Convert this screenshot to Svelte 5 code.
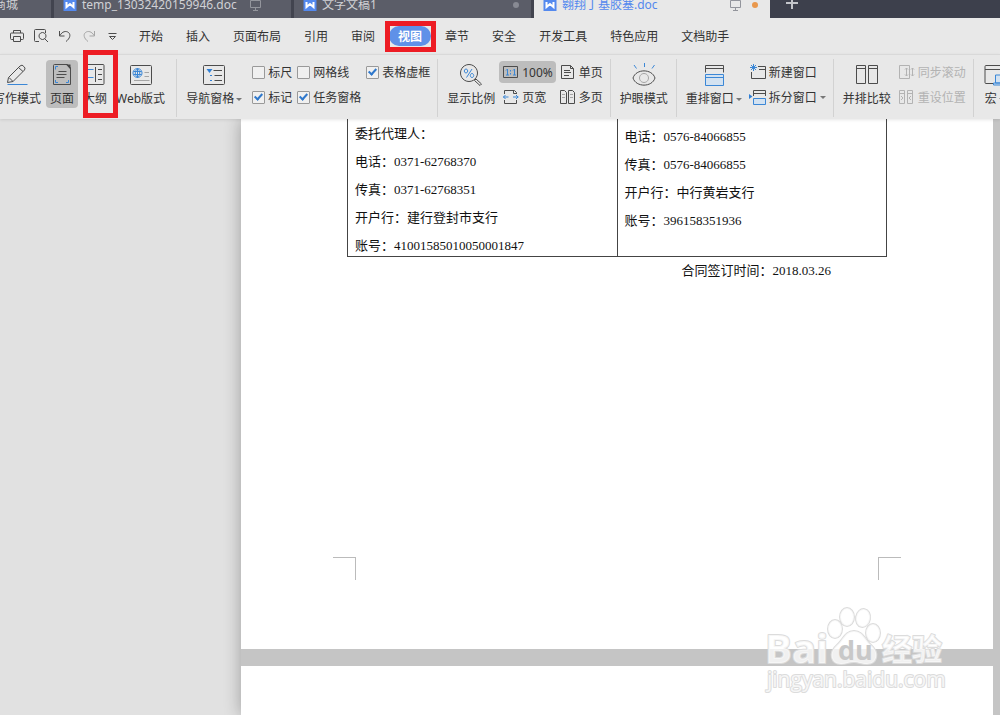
<script lang="ts">
  type Shape = [string, string];

  // k = dark stroke, b = blue stroke, f = light blue fill, s = solid blue, t = soft grey stroke, d = solid dark
  const icons: Record<string, Shape[]> = {
    print: [["k", "M4.500 5V2.500h7V5M4 11.500H2.500a1 1 0 0 1-1-1V6a1 1 0 0 1 1-1h11a1 1 0 0 1 1 1v4.500a1 1 0 0 1-1 1H12M4.500 8.500h7v5h-7z"]],
    preview: [["k", "M6 13.500H2.500a1 1 0 0 1-1-1v-10a1 1 0 0 1 1-1h9a1 1 0 0 1 1 1V5M11.500 10.500l3.500 3.500M9.500 4.500a3.500 3.500 0 1 0 .010 0z"]],
    undo: [["k", "M2.500 3v5h5M3 7.500c2-4 6-5 8.500-3s1.500 6-2.500 9"]],
    redo: [["t", "M13.500 3v5h-5M13 7.500c-2-4-6-5-8.500-3s-1.500 6 2.500 9"]],
    more: [["k", "M3.500 5.500h8M4.500 8.500l3 3 3-3z"]],
    pen: [["k", "M2.500 19.500l1-5L15 3a2.500 2.500 0 0 1 3.800.500 2.500 2.500 0 0 1 .700 3.500L8 18.500zM4 14.500l4 4M13.500 4.500l4.500 4"], ["b", "M2.500 21.500h20"]],
    page: [["k", "M8.500 8.500h8M6.500 11.500h10M6.500 14.500h8M4.500 1.500h13l3 3v17h-17v-19a1 1 0 0 1 1-1z"], ["b", "M5.500 6.500V3.500H8M5.500 17v2.500H8M18.500 17v2.500H16"], ["d", "M16 1.500h4.500v5z"]],
    outline: [["k", "M3 1.500h17a1 1 0 0 1 1 1v18a1 1 0 0 1-1 1H3zM12.500 4v15M15 6.500h4M15 11.500h4M15 16.500h4"], ["b", "M5 6.500h5.500M5 14.500h5.500"]],
    web: [["k", "M2.500 2.500h19a1 1 0 0 1 1 1v17a1 1 0 0 1-1 1h-19a1 1 0 0 1-1-1v-17a1 1 0 0 1 1-1z"], ["t", "M15.500 9.500h4.500M15.500 13.500h4.500M5 17.500h15.500"], ["b", "M8.500 5.500a4.500 4.500 0 1 0 .010 0M8.500 5.500c-3 2.500-3 6.500 0 9 3-2.500 3-6.500 0-9v9M4.500 8.500h8M4.500 11.500h8"]],
    nav: [["k", "M2.500 2.500h19a1 1 0 0 1 1 1v17a1 1 0 0 1-1 1h-19a1 1 0 0 1-1-1v-17a1 1 0 0 1 1-1zM11.500 7.500h8.500M12.500 12.500h7.500M12.500 17.500h7.500"], ["s", "M4.500 6h6l-3 4zM8 12h2v1H8zM8 17h2v1H8z"]],
    zoom: [["k", "M10 1.500a8.500 8.500 0 1 0 .010 0M15.500 17.500l1.500-1.500 5.500 5-1.500 1.500z"], ["b", "M13 6l-5.500 8.500M7 6a1.700 2 0 1 0 .010 0M13 10.500a1.700 2 0 1 0 .010 0"]],
    eye: [["k", "M1 15c3-9.500 19-9.500 22 0-3 9.500-19 9.500-22 0z"], ["t", "M12 10.500a4.500 4.500 0 1 0 .010 0"], ["b", "M2 2l2.500 3.500M12.500 0v4M22.500 2L20 5.500"]],
    arrange: [["k", "M3.500 9.500v-7h18v7M3.500 5.500h18"], ["f", "M3.500 11.500h18v11h-18zM3.500 14.500h18"]],
    compare: [["k", "M1.500 2.500h9v18h-9zM13.500 2.500h9v18h-9zM1.500 5.500h9M13.500 5.500h9"]],
    macro: [["k", "M11 20.500H3a1 1 0 0 1-1-1V3.500a1 1 0 0 1 1-1h19M2 6.500h20"], ["f", "M12.500 12h10v8h-10zM10.500 20h14v2h-14z"]],
    ratio: [["k", "M.500 2.500h14v11h-14z"], ["b", "M3 6.500L4.500 5v6M7.500 6v1.500M7.500 9v1.500M10 6.500L11.500 5v6M3 11h3M10 11h3"]],
    wide: [["k", "M1.500 5V1.500h10l2 2V5M1.500 11v3.500h12V11M10.500 1.500v3h3"], ["b", "M5.500 8H0M2.500 6l-2 2 2 2M10 8h5.500M13 6l2 2-2 2"]],
    single: [["k", "M1.500 1.500h9l3 3v10h-12zM4 6.500h6M4 8.500h7M4 11.500h5M10.500 1.500v3h3"]],
    multi: [["k", "M.500 1.500h4l2 2v11h-6zM8.500 1.500h4l2 2v11h-6z"], ["t", "M2 5.500h3M2 8.500h3M10 5.500h3M10 8.500h3"]],
    newwin: [["k", "M8 2.500h7.500v12h-14V8M9 5.500h6.500"], ["b", "M3.500 0v7M0 3.500h7M1 1l5 5M6 1L1 6"]],
    split: [["k", "M3.500 7V1.500h12V7M3.500 4.500h12"], ["f", "M3.500 9.500h12v6h-12z"], ["s", "M-1 5l3.500 2.500L-1 10z"]],
    sync: [["t", "M.500 1.500h10v13h-10zM7.500 4v8M6 5.500L7.500 4 9 5.500M6 10.500L7.500 12 9 10.500M13.500 4v8M12 5.500L13.500 4 15 5.500M12 10.500l1.500 1.500 1.500-1.500"]],
    reset: [["t", "M.500 1.500h5v13h-5zM8.500 1.500h5v13h-5zM.500 4.500h5M8.500 4.500h5M2 7l2 2-2 2M12 7l-2 2 2 2"]],
    screen: [["g", "M2.500 3.500h10v7h-10zM7.500 10.500v3M5 13.500h5"]],
    writer: [["w", "M1.500 1h13v13h-13z"], ["v", "M4.500 5v5L8 7l3.500 3V5"]],
  };

  const quick = [
    ["print", "打印"],
    ["preview", "打印预览"],
    ["undo", "撤销"],
    ["redo", "恢复"],
    ["more", "更多"],
  ];

  const menus = ["开始", "插入", "页面布局", "引用", "审阅", "视图", "章节", "安全", "开发工具", "特色应用", "文档助手"];
  let activeMenu = $state("视图");

  let options = $state([
    { label: "标尺", on: false },
    { label: "网格线", on: false },
    { label: "表格虚框", on: true },
    { label: "标记", on: true },
    { label: "任务窗格", on: true },
  ]);

  const partyA = ["委托代理人：", "电话：0371-62768370", "传真：0371-62768351", "开户行：建行登封市支行", "账号：41001585010050001847"];
  const partyB = ["电话：0576-84066855", "传真：0576-84066855", "开户行：中行黄岩支行", "账号：396158351936"];
</script>

{#snippet icon(name: string, size: number)}
  <svg class="icon" width={size} height={size} viewBox="0 0 {size} {size}" aria-hidden="true">
    {#each icons[name] as [kind, d]}
      <path class={kind} {d} />
    {/each}
  </svg>
{/snippet}

{#snippet big(name: string, label: string, arrow = false, on = false, marked = false)}
  <button class="big" class:on>
    {@render icon(name, 24)}
    <span class="label">{label}{#if arrow}<i class="arrow"></i>{/if}</span>
    {#if marked}<span class="mark mark-tool"></span>{/if}
  </button>
{/snippet}

{#snippet small(name: string, label: string, arrow = false, on = false, disabled = false)}
  <button class="small" class:on {disabled}>
    {@render icon(name, 16)}
    <span>{label}</span>
    {#if arrow}<i class="arrow"></i>{/if}
  </button>
{/snippet}

<div class="app">
  <header class="tabs">
    <button class="tab first">商城</button>
    <button class="tab">
      {@render icon("writer", 16)}
      <span class="name">temp_13032420159946.doc</span>
      <span class="screen">{@render icon("screen", 16)}</span>
    </button>
    <button class="tab">
      {@render icon("writer", 16)}
      <span class="name">文字文稿1</span>
      <i class="dot"></i>
    </button>
    <button class="tab active">
      {@render icon("writer", 16)}
      <span class="name">翱翔丁基胶塞.doc</span>
      {@render icon("screen", 16)}
      <i class="dot"></i>
    </button>
    <button class="add" aria-label="新建">
      <svg width="14" height="14" viewBox="0 0 14 14"><path class="plus" d="M7 1v12M1 7h12" /></svg>
    </button>
  </header>

  <nav class="menubar">
    <div class="quick">
      {#each quick as [name, title]}
        <button aria-label={title}>{@render icon(name, 16)}</button>
      {/each}
    </div>
    {#each menus as menu}
      <button class="menu" class:active={menu === activeMenu} onclick={() => (activeMenu = menu)}>
        {menu}
        {#if menu === "视图"}<span class="mark mark-menu"></span>{/if}
      </button>
    {/each}
  </nav>

  <div class="ribbon">
    <section class="views">
      {@render big("pen", "写作模式")}
      {@render big("page", "页面", false, true)}
      {@render big("outline", "大纲", false, false, true)}
      {@render big("web", "Web版式")}
    </section>
    <section class="show">
      {@render big("nav", "导航窗格", true)}
      <div class="checks">
        {#each options as option}
          <label><input type="checkbox" bind:checked={option.on} />{option.label}</label>
        {/each}
      </div>
    </section>
    <section>
      {@render big("zoom", "显示比例")}
      <div class="rows">
        {@render small("ratio", "100%", false, true)}
        {@render small("wide", "页宽")}
      </div>
      <div class="rows">
        {@render small("single", "单页")}
        {@render small("multi", "多页")}
      </div>
    </section>
    <section>
      {@render big("eye", "护眼模式")}
    </section>
    <section>
      {@render big("arrange", "重排窗口", true)}
      <div class="rows">
        {@render small("newwin", "新建窗口")}
        {@render small("split", "拆分窗口", true)}
      </div>
    </section>
    <section>
      {@render big("compare", "并排比较")}
      <div class="rows">
        {@render small("sync", "同步滚动", false, false, true)}
        {@render small("reset", "重设位置", false, false, true)}
      </div>
    </section>
    <section>
      {@render big("macro", "宏", true)}
    </section>
  </div>

  <main class="workspace">
    <div class="pages">
      <article class="sheet">
        <table>
          <tbody>
            <tr>
              <td>
                {#each partyA as line}<p>{line}</p>{/each}
              </td>
              <td class="party-b">
                {#each partyB as line}<p>{line}</p>{/each}
              </td>
            </tr>
          </tbody>
        </table>
        <p class="signed">合同签订时间：2018.03.26</p>
        <div class="corners"><i class="corner left"></i><i class="corner right"></i></div>
      </article>
      <article class="sheet next"></article>
    </div>

    <svg class="watermark" width="190" height="95" viewBox="0 0 190 95">
      <g class="halo">
        <ellipse cx="73" cy="29" rx="7" ry="9" />
        <ellipse cx="85" cy="17" rx="7" ry="9" />
        <ellipse cx="101" cy="18" rx="7" ry="9" transform="rotate(10 101 18)" />
        <ellipse cx="111" cy="33" rx="7" ry="9" />
        <path d="M92 31c9 0 11 9 17 14 9 8 6 19-4 19-6 0-8-2-13-2s-8 2-13 2c-10 0-13-11-4-19 6-5 8-14 17-14z" />
        <text class="brand" x="3" y="63">Bai</text>
        <text class="cn" x="120" y="60">经验</text>
        <text class="site" x="5" y="87">jingyan.baidu.com</text>
      </g>
      <text class="du" x="76" y="60">du</text>
    </svg>
  </main>
</div>

<style>
  :global(body) {
    background: #e1e1e1;
  }

  .app {
    display: flex;
    flex-direction: column;
    height: 100vh;
    overflow: hidden;
    font: 12px/16px "Noto Sans", "Noto Sans CJK SC", sans-serif;
    color: #333;
  }

  button {
    padding: 0;
    border: 0;
    background: none;
    font: inherit;
    color: inherit;
    white-space: nowrap;
    flex-shrink: 0;
  }

  .icon {
    display: block;
    flex-shrink: 0;
    overflow: visible;
  }

  path { fill: none; }
  .k { stroke: #4c4c4c; }
  .b { stroke: #3b87d6; }
  .t { stroke: #a5a5a5; }
  .f { stroke: #3b87d6; fill: #d3e2f1; }
  .s { fill: #2f7fd6; }
  .d { fill: #444; }
  .g { stroke: #93959c; }
  .w { fill: #5489ee; }
  .v { stroke: #fff; stroke-width: 2; }
  .plus { stroke: #c3c5ca; stroke-width: 2; }

  /* document tabs */
  .tabs {
    display: flex;
    align-items: flex-end;
    height: 18px;
    flex-shrink: 0;
    background: #3d404c;
  }

  .tab {
    box-sizing: border-box;
    display: flex;
    align-items: center;
    width: 240px;
    height: 26px;
    padding: 0 12px 0 8px;
    border-right: 3px solid #42444f;
    background: #5b5d68;
    color: #d0d1d5;
  }

  .tab.first {
    width: 60px;
    margin-left: -6px;
    padding-left: 0;
  }

  .tab.active {
    width: 236px;
    border-right: 0;
    background: #e8e8e8;
    color: #5489ee;
  }

  .name {
    flex: 1;
    margin-left: 4px;
    text-align: left;
  }

  .screen {
    margin-right: 15px;
  }

  .dot {
    width: 6px;
    height: 6px;
    border-radius: 3px;
    background: #888a93;
  }

  .active .dot {
    margin-left: 8px;
    background: #e9984d;
  }

  .add {
    height: 26px;
    padding: 0 15px;
  }

  /* menu bar */
  .menubar {
    display: flex;
    align-items: center;
    gap: 5px;
    height: 36px;
    flex-shrink: 0;
    padding-left: 9px;
    background: #e8e8e8;
  }

  .quick {
    display: flex;
    gap: 8px;
    margin-right: 4px;
  }

  .menu {
    position: relative;
    height: 20px;
    padding: 1px 9px 0;
    border-radius: 10px;
  }

  .menu.active {
    background: #5f91e8;
    color: #fff;
    font-weight: bold;
  }

  .mark {
    position: absolute;
    box-sizing: border-box;
    border: 5px solid #ed1c24;
    z-index: 2;
  }

  .mark-menu {
    inset: -5px -5px -6px -4px;
  }

  .mark-tool {
    top: -10px;
    left: 4px;
    width: 35px;
    height: 68px;
  }

  /* ribbon */
  .ribbon {
    position: relative;
    z-index: 1;
    display: flex;
    box-sizing: border-box;
    height: 65px;
    flex-shrink: 0;
    padding: 4px 0 2px;
    border-top: 1px solid #d9d9d9;
    background: #e8e8e8;
    box-shadow: 0 1px 3px rgba(0, 0, 0, 0.1);
  }

  section {
    display: flex;
    align-items: flex-start;
    flex-shrink: 0;
    padding: 1px 4px 0 5px;
    border-right: 1px solid #d2d2d2;
  }

  section:last-child {
    border-right: 0;
  }

  .views {
    gap: 1px;
    margin-left: -11px;
    padding: 1px 7px 0 0;
  }

  .show {
    padding: 1px 7px 0 5px;
  }

  .big {
    position: relative;
    display: flex;
    flex-direction: column;
    align-items: center;
    gap: 4px;
    height: 48px;
    padding: 3px 4px 1px;
    border-radius: 4px;
  }

  .label {
    display: flex;
    align-items: center;
  }

  .on {
    background: #bdbdbd;
  }

  .arrow {
    margin-left: 2px;
    border: 3px solid transparent;
    border-top-color: #777;
    border-bottom: 0;
  }

  .small .arrow {
    margin-left: 0;
  }

  .rows {
    display: flex;
    flex-direction: column;
    align-items: flex-start;
    gap: 3px;
    padding-top: 1px;
  }

  .small {
    display: flex;
    align-items: center;
    gap: 3px;
    height: 22px;
    padding: 0 3px 0 4px;
    border-radius: 4px;
  }

  .small span,
  .checks label {
    padding-top: 1px;
  }

  .small:disabled {
    color: #b3b3b3;
  }

  .small:disabled .t {
    stroke: #b3b3b3;
  }

  .checks {
    display: grid;
    grid-template-columns: repeat(3, auto);
    gap: 3px 5px;
    margin-left: 6px;
    padding-top: 1px;
  }

  .checks label {
    display: flex;
    align-items: center;
    gap: 3px;
    box-sizing: border-box;
    height: 22px;
    white-space: nowrap;
  }

  .checks input {
    appearance: none;
    box-sizing: border-box;
    width: 13px;
    height: 13px;
    margin: 0;
    border: 1px solid #999;
    border-radius: 1px;
    background: #f0f0f0;
  }

  .checks input:checked::before {
    content: "";
    display: block;
    width: 3px;
    height: 6px;
    margin: 0 0 0 3px;
    border: solid #2f78cc;
    border-width: 0 2px 2px 0;
    transform: rotate(42deg);
  }

  /* document */
  .workspace {
    position: relative;
    display: flex;
    flex: 1;
    min-height: 0;
    background: #e1e1e1;
  }

  .pages {
    display: flex;
    flex-direction: column;
    gap: 17px;
    flex: 1;
    margin-left: 241px;
    padding-right: 7px;
    background: #c5c5c5;
    box-shadow: 0 0 16px rgba(0, 0, 0, 0.3);
  }

  .sheet {
    box-sizing: border-box;
    height: 530px;
    flex-shrink: 0;
    padding: 0 106px;
    background: #fff;
    color: #111;
    font: 13px/20px "Liberation Serif", "Noto Sans CJK SC", serif;
  }

  .sheet.next {
    flex: 1;
    height: auto;
  }

  table {
    width: 100%;
    table-layout: fixed;
    border-collapse: collapse;
  }

  td {
    padding: 5px 7px 0;
    border: 1px solid #444;
    border-top: 0;
    vertical-align: top;
  }

  td.party-b {
    padding-top: 8px;
  }

  p {
    margin: 0 0 8px;
  }

  td p:last-child {
    margin-bottom: 0;
  }

  .signed {
    margin: 4px 56px 0 0;
    text-align: right;
  }

  .corners {
    display: flex;
    justify-content: space-between;
    margin: 276px -14px 0;
  }

  .corner {
    width: 22px;
    height: 22px;
    border-top: 1px solid #bbb;
  }

  .corner.left {
    border-right: 1px solid #bbb;
  }

  .corner.right {
    border-left: 1px solid #bbb;
  }

  .watermark {
    position: absolute;
    right: 48px;
    bottom: 20px;
    overflow: visible;
  }

  .halo > * {
    fill: rgba(255, 255, 255, 0.75);
    stroke: #dcdcdc;
    stroke-width: 2px;
    stroke-linejoin: round;
    paint-order: stroke;
  }

  .brand {
    font: bold 40px "Open Sans", sans-serif;
  }

  .cn {
    font: bold 30px "Noto Sans CJK SC", sans-serif;
  }

  .site {
    font: 21px "Open Sans", sans-serif;
  }

  .du {
    font: bold 27px "Open Sans", sans-serif;
    fill: #c8c8c8;
  }
</style>
